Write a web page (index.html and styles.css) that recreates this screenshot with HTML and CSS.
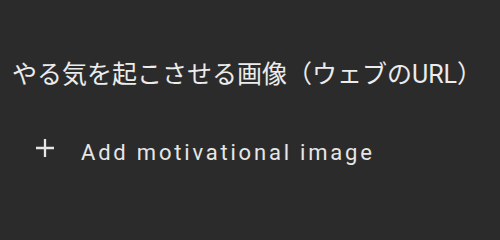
FILE: index.html
```html
<!DOCTYPE html>
<html lang="ja">
<head>
<meta charset="utf-8">
<link rel="stylesheet" href="styles.css">
</head>
<body>
<div class="panel">
  <div class="title">やる気を起こさせる画像（ウェブのURL）</div>
  <button class="add-btn">
    <svg class="plus" width="18" height="18" viewBox="0 0 18 18"><path d="M9 0v18M0 9h18" stroke="currentColor" stroke-width="2.3" fill="none"/></svg>
    <span class="label">Add motivational image</span>
  </button>
</div>
</body>
</html>
```
FILE: styles.css
```css
html, body {
  margin: 0;
  padding: 0;
  background: #2b2b2b;
}
.panel {
  width: 500px;
  height: 214px;
  box-sizing: border-box;
  padding: 60px 0 0 12px;
  display: flex;
  flex-direction: column;
  align-items: flex-start;
}
.title {
  font-family: Roboto, "Noto Sans CJK JP", sans-serif;
  font-size: 25px;
  line-height: 30px;
  color: #ececec;
}
.add-btn {
  margin-top: 48px;
  margin-left: 24px;
  display: flex;
  align-items: flex-start;
  gap: 27px;
  background: none;
  border: 0;
  padding: 0;
  color: #e6e6e6;
  font-family: Roboto, sans-serif;
  font-size: 22px;
  letter-spacing: 2.8px;
}
.plus { display: block; margin-top: 1px; }
.label { line-height: 30px; }
```
